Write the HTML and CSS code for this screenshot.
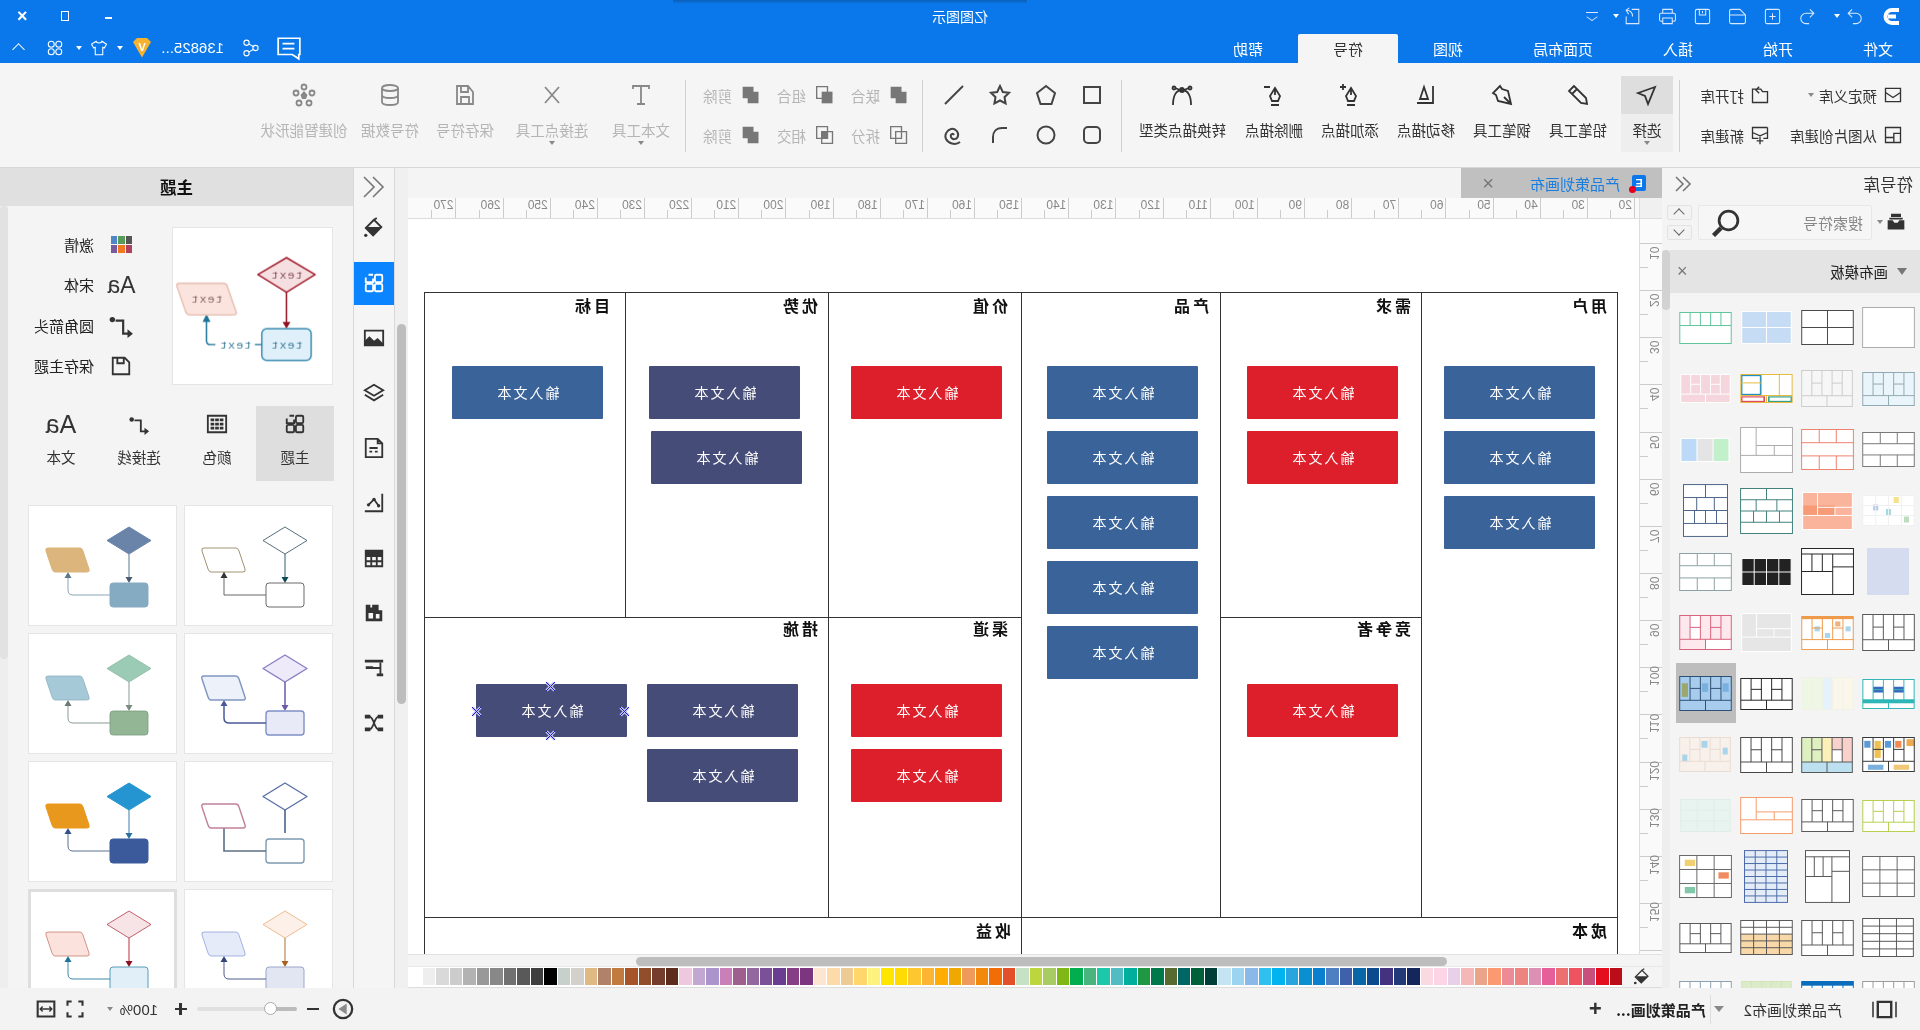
FILE: index.html
```html
<!DOCTYPE html>
<html lang="zh-CN">
<head>
    <meta charset="UTF-8">
    <title>亿图图示</title>
    <link rel="stylesheet" href="styles.css">
</head>
<body>
<!-- icon sprite -->
<svg class="sprite" xmlns="http://www.w3.org/2000/svg">
    <symbol id="i-undo" viewBox="0 0 24 24"><path d="M9 3L4 8l5 5M4 8h10a6.500 6.500 0 0 1 0 13h-4"/></symbol>
    <symbol id="i-redo" viewBox="0 0 24 24"><path d="M15 3l5 5-5 5M20 8H10a6.500 6.500 0 0 0 0 13h4"/></symbol>
    <symbol id="i-new" viewBox="0 0 24 24"><rect x="3" y="3" width="18" height="18" rx="2"/><path d="M12 8v8M8 12h8"/></symbol>
    <symbol id="i-open" viewBox="0 0 24 24"><path d="M2 10v9a2 2 0 0 0 2 2h16a2 2 0 0 0 2-2V5a2 2 0 0 0-2-2H9zM2 10h20"/></symbol>
    <symbol id="i-save" viewBox="0 0 24 24"><rect x="3" y="3" width="18" height="18" rx="2"/><path d="M8 3v7h8V3M12 5v3"/></symbol>
    <symbol id="i-print" viewBox="0 0 24 24"><path d="M6 8V3h12v5M6 18H4a2 2 0 0 1-2-2V10a2 2 0 0 1 2-2h16a2 2 0 0 1 2 2v6a2 2 0 0 1-2 2h-2M6 14h12v7H6z"/></symbol>
    <symbol id="i-export" viewBox="0 0 24 24"><path d="M13 3H4v18h16v-9M12 12c0-5 3-8 8-8M16 1l4 3-3 5"/></symbol>
    <symbol id="i-chat" viewBox="0 0 24 24"><path d="M2 3h20v15H9l-6 4v-4H2zM7 8h11M7 12.500h11"/></symbol>
    <symbol id="i-share" viewBox="0 0 24 24"><circle cx="6" cy="12" r="3.500"/><circle cx="18" cy="5" r="3.500"/><circle cx="18" cy="19" r="3.500"/><path d="M9 10l6-3.500M9 14l6 3.500"/></symbol>
    <symbol id="i-shirt" viewBox="0 0 24 24"><path d="M8 3L2 7l3 5 2-1v10h10V11l2 1 3-5-6-4c-1 3-7 3-8 0z"/></symbol>
    <symbol id="i-apps" viewBox="0 0 24 24"><circle cx="7" cy="7" r="4"/><circle cx="17" cy="7" r="4"/><circle cx="7" cy="17" r="4"/><circle cx="17" cy="17" r="4"/></symbol>

    <symbol id="i-lib" viewBox="0 0 24 24"><path d="M3 4h18v16H3zM3 9l9 6 9-6"/></symbol>
    <symbol id="i-libopen" viewBox="0 0 24 24"><path d="M3 8h6l2-3h10v16H3zM13 2l4 4-4 4"/></symbol>
    <symbol id="i-libimg" viewBox="0 0 24 24"><path d="M3 3h18v18H3zM3 10h8v11M11 15h10"/></symbol>
    <symbol id="i-libnew" viewBox="0 0 24 24"><path d="M3 3h18v13H14M3 3v13h5M3 9l9 4 9-4M12 14v9M8 19h8"/></symbol>
    <symbol id="i-cursor" viewBox="0 0 24 24"><path d="M4 4l17 6-7 3-3 8z"/></symbol>
    <symbol id="i-pencil" viewBox="0 0 24 24"><path d="M16 3l5 5L9 20l-6 1 1-6zM13 6l5 5"/></symbol>
    <symbol id="i-pen" viewBox="0 0 24 24"><path d="M14 3l7 7-3 2-2 6-13 3 3-13 6-2zM4 20l6-6"/></symbol>
    <symbol id="i-move" viewBox="0 0 24 24"><path d="M5 3v17h16"/><path d="M10 16l4-12 4 12z"/></symbol>
    <symbol id="i-add" viewBox="0 0 24 24"><path d="M11 5l5 8-2 5H8l-2-5zM11 5v7M7 22h8M19 1v6M16 4h6"/></symbol>
    <symbol id="i-del" viewBox="0 0 24 24"><path d="M11 5l5 8-2 5H8l-2-5zM11 5v7M7 22h8M16 4h6"/></symbol>
    <symbol id="i-convert" viewBox="0 0 24 24"><path d="M3 22c0-9 3-15 9-15s9 6 9 15M5 5l5 2M19 5l-5 2"/><circle cx="12" cy="7" r="2"/><circle cx="4" cy="5" r="1.500"/><circle cx="20" cy="5" r="1.500"/></symbol>

    <symbol id="i-rect" viewBox="0 0 24 24"><path d="M4 4h16v16H4z"/></symbol>
    <symbol id="i-penta" viewBox="0 0 24 24"><path d="M12 3l9 7-3.500 11h-11L3 10z"/></symbol>
    <symbol id="i-star" viewBox="0 0 24 24"><path d="M12 3l2.800 6 6.200.8-4.500 4.400 1.100 6.300L12 17.500 6.400 20.500l1.100-6.300L3 9.800 9.200 9z"/></symbol>
    <symbol id="i-line" viewBox="0 0 24 24"><path d="M3 3l18 18"/></symbol>
    <symbol id="i-rrect" viewBox="0 0 24 24"><rect x="4" y="4" width="16" height="16" rx="4"/></symbol>
    <symbol id="i-circle" viewBox="0 0 24 24"><circle cx="12" cy="12" r="8.500"/></symbol>
    <symbol id="i-arc" viewBox="0 0 24 24"><path d="M5 5h5c6 0 9 4 9 9v6"/></symbol>
    <symbol id="i-spiral" viewBox="0 0 24 24"><path d="M12 12c1-2 4-1 3 2s-6 3-7-1 3-8 7-7 7 6 5 10-9 7-14 3"/></symbol>

    <symbol id="i-union" viewBox="0 0 24 24"><path class="solid" d="M9 2h13v14h-6v6H3V8h6z"/></symbol>
    <symbol id="i-group" viewBox="0 0 24 24"><path class="solid" d="M3 8h13v14H3z"/><path d="M9 2h13v14H9z"/></symbol>
    <symbol id="i-subtract" viewBox="0 0 24 24"><path class="solid" d="M3 8h13v14H3zM9 2h13v14h-6V8H9z"/></symbol>
    <symbol id="i-split" viewBox="0 0 24 24"><path d="M9 2h13v14H9zM3 8h13v14H3z"/></symbol>
    <symbol id="i-intersect" viewBox="0 0 24 24"><path d="M9 2h13v14H9zM3 8h13v14H3z"/><path class="solid" d="M9 8h7v8H9z"/></symbol>

    <symbol id="i-text" viewBox="0 0 24 24"><path d="M4 6V3h16v3M12 3v18M8 21h8"/></symbol>
    <symbol id="i-connect" viewBox="0 0 24 24"><path d="M5 4l14 16M19 4L5 20"/></symbol>
    <symbol id="i-floppy" viewBox="0 0 24 24"><path d="M4 9l5-6h11v18H4zM9 3v6h7V3M8 21v-7h8v7"/></symbol>
    <symbol id="i-db" viewBox="0 0 24 24"><ellipse cx="12" cy="5" rx="8" ry="3"/><path d="M4 5v14c0 4 16 4 16 0V5M4 12c0 4 16 4 16 0"/></symbol>
    <symbol id="i-smart" viewBox="0 0 24 24"><circle cx="12" cy="4" r="2.500"/><circle cx="4" cy="10" r="2.500"/><circle cx="20" cy="10" r="2.500"/><circle cx="7" cy="20" r="2.500"/><circle cx="17" cy="20" r="2.500"/><path class="solid" d="M12 8l3.500 4-1.500 4h-4l-1.500-4z"/></symbol>

    <symbol id="i-bucket" viewBox="0 0 24 24"><path d="M12 3l9 9-8 8-9-9zM9 1l3 2"/><path class="solid" d="M4 11h17l-8 9z"/><circle class="solid" cx="21" cy="20" r="1.800"/></symbol>
    <symbol id="i-grid" viewBox="0 0 24 24"><rect x="3" y="3" width="8" height="8" rx="1.500"/><path d="M13 3h5M21 6v5h-8V7"/><rect x="3" y="13" width="8" height="8" rx="1.500"/><rect x="13" y="13" width="8" height="8" rx="1.500"/></symbol>
    <symbol id="i-image" viewBox="0 0 24 24"><path d="M2 4h20v16H2z"/><path class="solid" d="M2 18l6-6 4 3 5-5 5 5v5H2z"/></symbol>
    <symbol id="i-layers" viewBox="0 0 24 24"><path d="M12 3l10 6-10 6L2 9zM2 14l10 6 10-6"/></symbol>
    <symbol id="i-doc" viewBox="0 0 24 24"><path d="M8 2h13v20H3V7zM8 2v5H3M8 12h9M14 16h3M8 16h3"/></symbol>
    <symbol id="i-chart" viewBox="0 0 24 24"><path d="M3 2v19h19M7 15l5-7 6 6"/><circle class="solid" cx="7" cy="15" r="1.800"/><circle class="solid" cx="12" cy="8" r="1.800"/><circle class="solid" cx="18" cy="14" r="1.800"/></symbol>
    <symbol id="i-table" viewBox="0 0 24 24"><path d="M3 4h18v17H3zM3 10h18M3 15.500h18M9 10v11M15 10v11"/><path class="solid" d="M3 4h18v6H3z"/></symbol>
    <symbol id="i-puzzle" viewBox="0 0 24 24"><path class="solid" d="M3 9h4V3h7v3h2V3h5v18H3zM6 13v5h4v-5zM13 12v6h5v-6z"/></symbol>
    <symbol id="i-tree" viewBox="0 0 24 24"><path d="M5 6v13M5 12h9"/><path class="solid" d="M2 3h20v3H2zM2 18h7v3H2zM13 10h8v3h-8z"/></symbol>
    <symbol id="i-mind" viewBox="0 0 24 24"><path d="M7 5c5 0 5 14 10 14M17 5c-5 0-5 14-10 14"/><path class="solid" d="M2 3h6v4H2zM16 3h6v4h-6zM2 17h6v4H2zM16 17h6v4h-6z"/></symbol>
    <symbol id="i-savebox" viewBox="0 0 24 24"><path d="M3 8l5-5h13v18H3zM9 3v6h7V3"/></symbol>
    <symbol id="i-bend" viewBox="0 0 24 24"><path d="M3 20h7V8h7"/><circle class="solid" cx="20" cy="7" r="2.500"/><path class="solid" d="M6 16v8l-5-4z"/></symbol>
    <symbol id="i-colors" viewBox="0 0 24 24"><path d="M2 3h20v18H2z"/><path class="solid" d="M5 6h4v3H5zM10 6h4v3h-4zM15 6h4v3h-4zM5 10.500h4v3H5zM10 10.500h4v3h-4zM15 10.500h4v3h-4zM5 15h4v3H5zM10 15h4v3h-4zM15 15h4v3h-4z"/></symbol>
    <symbol id="i-search" viewBox="0 0 24 24"><circle cx="10" cy="10" r="7.500"/><path d="M16 16l6 6" stroke-width="3.500"/></symbol>
    <symbol id="i-box" viewBox="0 0 24 24"><path class="solid" d="M6 2h12v4H6zM4 7h16v2H4zM2 10h6l2 3h4l2-3h6v11H2z"/></symbol>
    <symbol id="i-pages" viewBox="0 0 28 24"><path d="M7 4h14v16H7z" stroke-width="2.500"/><path d="M2 4v16M26 4v16"/></symbol>
    <symbol id="i-fit" viewBox="0 0 24 24"><path d="M2 3h20v18H2z" stroke-width="2.500"/><path d="M6 12h12M8 9l-3 3 3 3M16 9l3 3-3 3"/></symbol>
    <symbol id="i-full" viewBox="0 0 24 24"><path d="M3 8V3h5M16 3h5v5M21 16v5h-5M8 21H3v-5" stroke-width="2.500"/></symbol>
    <symbol id="i-nav" viewBox="0 0 24 24"><circle cx="12" cy="12" r="10" stroke-width="2.500"/><path class="solid tint" d="M8 6v12l9-6z"/></symbol>
    <symbol id="i-hd" viewBox="0 0 11 11"><path d="M1.500 1.500l8 8M9.500 1.500l-8 8" stroke="#c6c6f5" stroke-width="3"/><path d="M1 1l9 9M10 1l-9 9" stroke="#1c1cc8" stroke-width="1"/></symbol>
</svg>

<div class="app">
    <!-- title bar -->
    <header class="titlebar">
        <div class="qa">
            <svg class="logo" viewBox="0 0 21 19"><path d="M4 3h7a6.500 6.500 0 0 1 0 13H4M7 9.500h8"/></svg>
            <svg class="qa-ic redo"><use href="#i-redo"/></svg>
            <i class="tri tri-white qa-drop"></i>
            <svg class="qa-ic undo"><use href="#i-undo"/></svg>
            <svg class="qa-ic"><use href="#i-new"/></svg>
            <svg class="qa-ic"><use href="#i-open"/></svg>
            <svg class="qa-ic"><use href="#i-save"/></svg>
            <svg class="qa-ic"><use href="#i-print"/></svg>
            <svg class="qa-ic"><use href="#i-export"/></svg>
            <i class="tri tri-white qa-drop2"></i>
            <span class="qa-more"></span>
        </div>
        <div class="app-title">亿图图示</div>
        <div class="win">
            <span class="win-min"></span>
            <span class="win-max"></span>
            <span class="win-close">×</span>
        </div>
    </header>

    <!-- menu tabs -->
    <nav class="menubar">
        <span class="menu-tab">文件</span>
        <span class="menu-tab">开始</span>
        <span class="menu-tab">插入</span>
        <span class="menu-tab">页面布局</span>
        <span class="menu-tab">视图</span>
        <span class="menu-tab active">符号</span>
        <span class="menu-tab">帮助</span>
        <div class="account">
            <svg class="acc-chat"><use href="#i-chat"/></svg>
            <svg class="acc-ic acc-share"><use href="#i-share"/></svg>
            <span class="user">136825...</span>
            <span class="vip">V</span>
            <i class="tri tri-white acc-d1"></i>
            <svg class="acc-ic acc-shirt"><use href="#i-shirt"/></svg>
            <i class="tri tri-white acc-d2"></i>
            <svg class="acc-ic acc-apps"><use href="#i-apps"/></svg>
            <span class="acc-up"></span>
        </div>
    </nav>

    <!-- ribbon -->
    <section class="ribbon">
        <div class="rb-lib">
            <div class="rb-row"><svg class="ic20"><use href="#i-lib"/></svg>预定义库<i class="tri lib-drop"></i></div>
            <div class="rb-row"><svg class="ic20"><use href="#i-libopen"/></svg>打开库</div>
            <div class="rb-row"><svg class="ic20"><use href="#i-libimg"/></svg>从图片创建库</div>
            <div class="rb-row"><svg class="ic20"><use href="#i-libnew"/></svg>新建库</div>
        </div>
        <div class="rb-sep"></div>
        <div class="rb-tools">
            <div class="tool sel"><span class="tool-ic"><svg class="ic24"><use href="#i-cursor"/></svg></span><span class="tool-label">选择</span><i class="tri"></i></div>
            <div class="tool"><span class="tool-ic"><svg class="ic24"><use href="#i-pencil"/></svg></span><span class="tool-label">铅笔工具</span></div>
            <div class="tool"><span class="tool-ic"><svg class="ic24"><use href="#i-pen"/></svg></span><span class="tool-label">钢笔工具</span></div>
            <div class="tool"><span class="tool-ic"><svg class="ic24"><use href="#i-move"/></svg></span><span class="tool-label">移动描点</span></div>
            <div class="tool"><span class="tool-ic"><svg class="ic24"><use href="#i-add"/></svg></span><span class="tool-label">添加描点</span></div>
            <div class="tool"><span class="tool-ic"><svg class="ic24"><use href="#i-del"/></svg></span><span class="tool-label">删除描点</span></div>
            <div class="tool wide"><span class="tool-ic"><svg class="ic24"><use href="#i-convert"/></svg></span><span class="tool-label">转换描点类型</span></div>
        </div>
        <div class="rb-sep sep-shapes"></div>
        <div class="rb-shapes">
            <svg class="ic24"><use href="#i-rect"/></svg>
            <svg class="ic24"><use href="#i-penta"/></svg>
            <svg class="ic24"><use href="#i-star"/></svg>
            <svg class="ic24"><use href="#i-line"/></svg>
            <svg class="ic24"><use href="#i-rrect"/></svg>
            <svg class="ic24"><use href="#i-circle"/></svg>
            <svg class="ic24"><use href="#i-arc"/></svg>
            <svg class="ic24"><use href="#i-spiral"/></svg>
        </div>
        <div class="rb-sep"></div>
        <div class="rb-bool">
            <div class="bool"><svg class="ic20"><use href="#i-union"/></svg>联合</div>
            <div class="bool"><svg class="ic20"><use href="#i-group"/></svg>组合</div>
            <div class="bool"><svg class="ic20"><use href="#i-subtract"/></svg>剪除</div>
            <div class="bool"><svg class="ic20"><use href="#i-split"/></svg>拆分</div>
            <div class="bool"><svg class="ic20"><use href="#i-intersect"/></svg>相交</div>
            <div class="bool"><svg class="ic20"><use href="#i-subtract"/></svg>剪除</div>
        </div>
        <div class="rb-sep"></div>
        <div class="rb-off">
            <div class="tool off w88"><span class="tool-ic"><svg class="ic24"><use href="#i-text"/></svg></span><span class="tool-label">文本工具</span><i class="tri"></i></div>
            <div class="tool off w90"><span class="tool-ic"><svg class="ic24"><use href="#i-connect"/></svg></span><span class="tool-label">连接点工具</span><i class="tri"></i></div>
            <div class="tool off w84"><span class="tool-ic"><svg class="ic24"><use href="#i-floppy"/></svg></span><span class="tool-label">保存符号</span></div>
            <div class="tool off w66"><span class="tool-ic"><svg class="ic24"><use href="#i-db"/></svg></span><span class="tool-label">符号数据</span></div>
            <div class="tool off w106"><span class="tool-ic"><svg class="ic24"><use href="#i-smart"/></svg></span><span class="tool-label">创建智能形状</span></div>
        </div>
    </section>

    <main class="main">
        <!-- symbol library -->
        <aside class="lib">
            <div class="lib-head">
                <span class="lib-title">符号库</span>
                <svg class="chev"><path d="M9 2L2 9l7 7M16 2L9 9l7 7"/></svg>
            </div>
            <div class="lib-search">
                <svg class="ic20 box-ic"><use href="#i-box"/></svg>
                <i class="tri lib-search-d"></i>
                <div class="search-box">
                    <span>搜索符号</span>
                    <svg class="search-ic"><use href="#i-search"/></svg>
                </div>
                <div class="updown">
                    <span class="ud ud-up"></span>
                    <span class="ud ud-down"></span>
                </div>
            </div>
            <div class="lib-wrap">
                <div class="lib-body">
                    <div class="cat">
                        <i class="tri cat-tri"></i>
                        <span>画布模板</span>
                        <span class="cat-x">×</span>
                    </div>
                    <div class="tpl-grid" id="tplGrid"></div>
                </div>
                <div class="lib-scroll"><div class="lib-thumb"></div></div>
            </div>
        </aside>

        <!-- canvas area -->
        <section class="center">
            <div class="docbar">
                <div class="doc-tab">
                    <span class="doc-ic">E<i></i></span>
                    <span class="doc-name">产品策划画布</span>
                    <span class="doc-x">×</span>
                </div>
            </div>
            <div class="hruler">
                <div class="corner"></div>
                <div class="hticks" id="hticks"></div>
            </div>
            <div class="canvas-row">
                <div class="vruler" id="vticks"></div>
                <div class="canvas">
                    <div class="bmc">
                        <div class="cell c-user"><div class="cell-title">用户</div><div class="nodes"><div class="node blue">输入文本</div><div class="node blue">输入文本</div><div class="node blue">输入文本</div></div></div>
                        <div class="cell c-need"><div class="cell-title">需求</div><div class="nodes"><div class="node red">输入文本</div><div class="node red">输入文本</div></div></div>
                        <div class="cell c-prod"><div class="cell-title">产品</div><div class="nodes"><div class="node blue">输入文本</div><div class="node blue">输入文本</div><div class="node blue">输入文本</div><div class="node blue">输入文本</div><div class="node blue">输入文本</div></div></div>
                        <div class="cell c-value"><div class="cell-title">价值</div><div class="nodes"><div class="node red">输入文本</div></div></div>
                        <div class="cell c-adv"><div class="cell-title">优势</div><div class="nodes"><div class="node navy">输入文本</div><div class="node navy nudge">输入文本</div></div></div>
                        <div class="cell c-goal"><div class="cell-title">目标</div><div class="nodes"><div class="node blue">输入文本</div></div></div>
                        <div class="cell low c-rival"><div class="cell-title">竞争者</div><div class="nodes"><div class="node red">输入文本</div></div></div>
                        <div class="cell low c-chan"><div class="cell-title">渠道</div><div class="nodes"><div class="node red">输入文本</div><div class="node red">输入文本</div></div></div>
                        <div class="cell low c-act">
                            <div class="cell-title">措施</div>
                            <div class="act-row">
                                <div class="nodes"><div class="node navy">输入文本</div><div class="node navy">输入文本</div></div>
                                <div class="node navy picked">输入文本
                                    <svg class="hd hd-t"><use href="#i-hd"/></svg>
                                    <svg class="hd hd-b"><use href="#i-hd"/></svg>
                                    <svg class="hd hd-l"><use href="#i-hd"/></svg>
                                    <svg class="hd hd-r"><use href="#i-hd"/></svg>
                                </div>
                            </div>
                        </div>
                        <div class="cell c-cost"><div class="cell-title">成本</div></div>
                        <div class="cell c-rev"><div class="cell-title">收益</div></div>
                    </div>
                </div>
            </div>
            <div class="hscroll"><div class="hthumb"></div></div>
            <div class="colors">
                <div class="bucket"><svg class="ic18"><use href="#i-bucket"/></svg></div>
                <div class="swatches" id="swatches"></div>
            </div>
        </section>

        <div class="vscroll"><div class="vthumb"></div></div>

        <!-- icon strip -->
        <div class="strip">
            <div class="strip-top"><svg class="chev-big"><path d="M12 2L2 12l10 10M21 2L11 12l10 10"/></svg></div>
            <div class="strip-btn"><svg class="ic22"><use href="#i-bucket"/></svg></div>
            <div class="strip-btn active"><svg class="ic22"><use href="#i-grid"/></svg></div>
            <div class="strip-btn"><svg class="ic22"><use href="#i-image"/></svg></div>
            <div class="strip-btn"><svg class="ic22"><use href="#i-layers"/></svg></div>
            <div class="strip-btn"><svg class="ic22"><use href="#i-doc"/></svg></div>
            <div class="strip-btn"><svg class="ic22"><use href="#i-chart"/></svg></div>
            <div class="strip-btn"><svg class="ic22"><use href="#i-table"/></svg></div>
            <div class="strip-btn"><svg class="ic22"><use href="#i-puzzle"/></svg></div>
            <div class="strip-btn"><svg class="ic22"><use href="#i-tree"/></svg></div>
            <div class="strip-btn"><svg class="ic22"><use href="#i-mind"/></svg></div>
        </div>

        <!-- theme panel -->
        <aside class="themes">
            <div class="themes-head">主题</div>
            <div class="themes-wrap">
                <div class="themes-body">
                    <div class="theme-top">
                        <svg class="preview" viewBox="0 0 161 158">
                            <path d="M46 30l29 17-29 18-29-18z" fill="#f5dfe1" stroke="#a3202f" stroke-width="1.500" stroke-linejoin="round"/>
                            <text x="46" y="51" class="pv-t" fill="#8a5560">text</text>
                            <path d="M46 65v32" stroke="#8e1020" stroke-width="1.500"/>
                            <path d="M42 95h8l-4 7z" fill="#8e1020"/>
                            <rect x="21" y="102" width="50" height="32" rx="5" fill="#dff0fa" stroke="#3a8cb0" stroke-width="1.500"/>
                            <text x="46" y="122" class="pv-t" fill="#3f7f9c">text</text>
                            <path d="M71 118h52q4 0 4-4V94" fill="none" stroke="#1f7396" stroke-width="1.500"/>
                            <path d="M123 95h8l-4-8z" fill="#1f7396"/>
                            <rect x="78" y="110" width="40" height="16" fill="#fff"/>
                            <text x="98" y="122" class="pv-t" fill="#3f7f9c">text</text>
                            <path d="M113 56h41q4 0 3 3l-9 26q-1 3-4 3H100q-4 0-3-3l9-26q1-3 4-3z" fill="#fbe4de" stroke="#e8c3b8"/>
                            <text x="127" y="76" class="pv-t" fill="#8a6a60">text</text>
                        </svg>
                        <div class="theme-opts">
                            <div class="opt"><span class="opt-ic"><span class="palette"><i></i><i></i><i></i><i></i><i></i><i></i></span></span>激情</div>
                            <div class="opt"><span class="opt-ic"><span class="aa">Aa</span></span>宋体</div>
                            <div class="opt"><span class="opt-ic"><svg class="ic26 black"><use href="#i-bend"/></svg></span>圆角箭头</div>
                            <div class="opt"><span class="opt-ic"><svg class="ic22 black"><use href="#i-savebox"/></svg></span>保存主题</div>
                        </div>
                    </div>
                    <div class="theme-tabs">
                        <div class="ttab active"><svg class="ic22"><use href="#i-grid"/></svg>主题</div>
                        <div class="ttab"><svg class="ic22"><use href="#i-colors"/></svg>颜色</div>
                        <div class="ttab"><svg class="ic22"><use href="#i-bend"/></svg>连接线</div>
                        <div class="ttab"><span class="aa big">Aa</span>文本</div>
                    </div>
                    <div class="theme-cards" id="themeCards"></div>
                </div>
                <div class="themes-scroll"><div class="themes-thumb"></div></div>
            </div>
        </aside>
    </main>

    <!-- status bar -->
    <footer class="status">
        <svg class="st-pages"><use href="#i-pages"/></svg>
        <span class="st-page">产品策划画布2</span>
        <i class="tri st-tri"></i>
        <span class="st-sep"></span>
        <span class="st-cur">产品策划画...</span>
        <span class="st-plus">+</span>
        <div class="zoom">
            <svg class="ic22"><use href="#i-nav"/></svg>
            <span class="z-btn z-minus"></span>
            <div class="slider"><span class="knob"></span></div>
            <span class="z-btn z-plus"></span>
            <span class="z-val">100%</span>
            <i class="tri z-tri"></i>
            <svg class="ic20 z-full"><use href="#i-full"/></svg>
            <svg class="ic20 z-fit"><use href="#i-fit"/></svg>
        </div>
    </footer>
</div>
<script src="script.js"></script>
</body>
</html>
```

FILE: styles.css
```css
* {
    box-sizing: border-box;
}

body {
    margin: 0;
    overflow: hidden;
    background: #f3f3f3;
    font-family: "Noto Sans CJK SC", "Liberation Sans", sans-serif;
    color: #333;
}

.sprite {
    display: none;
}

svg {
    fill: none;
    stroke: currentColor;
    stroke-width: 1.6;
    flex: none;
}

.solid {
    fill: currentColor;
    stroke: none;
}

.tint {
    fill: #8a8a8a;
}

/* the whole window is shown flipped, as in the screenshot */
.app {
    width: 1920px;
    height: 1030px;
    display: flex;
    flex-direction: column;
    transform: scaleX(-1);
}

.tri {
    display: block;
    width: 0;
    height: 0;
    border-left: 3px solid transparent;
    border-right: 3px solid transparent;
    border-top: 4px solid #888;
}

.tri-white {
    border-top-color: #fff;
}

.ic18 { width: 18px; height: 18px; }
.ic20 { width: 20px; height: 20px; }
.ic22 { width: 22px; height: 22px; }
.ic24 { width: 24px; height: 24px; }
.ic26 { width: 26px; height: 26px; }

/* title bar */
.titlebar {
    height: 32px;
    background: #0a78ea;
    color: #fff;
    display: flex;
    align-items: center;
    position: relative;
}

.titlebar::before {
    content: "";
    position: absolute;
    top: 0;
    left: 893px;
    width: 354px;
    height: 4px;
    background: linear-gradient(#0b5fb8, #0a78ea);
}

.qa {
    flex: 1 1 0;
    display: flex;
    align-items: center;
    padding-left: 17px;
    gap: 16px;
}

.logo {
    width: 21px;
    height: 19px;
    stroke-width: 4;
    color: #fff;
}

.qa-ic {
    width: 19px;
    height: 19px;
    stroke-width: 1.300;
    color: #dbe9ff;
}

.redo {
    margin-left: 1.500px;
}

.qa-drop {
    margin-left: -10.500px;
}

.undo {
    margin-left: .500px;
}

.qa-drop2 {
    margin-left: -11.500px;
}

.qa-more {
    width: 12px;
    height: 9px;
    margin-left: -1px;
    border-top: 1px solid #dbe9ff;
    position: relative;
}

.qa-more::after {
    content: "";
    position: absolute;
    left: 2px;
    top: 0;
    width: 7px;
    height: 7px;
    border-right: 1px solid #dbe9ff;
    border-bottom: 1px solid #dbe9ff;
    transform: scaleY(.7) rotate(45deg);
}

.app-title {
    font-size: 14px;
    line-height: 30px;
}

.win {
    flex: 1 1 0;
    display: flex;
    align-items: center;
    justify-content: flex-end;
    padding-right: 17px;
}

.win-min {
    width: 7px;
    height: 2px;
    background: #fff;
    margin-right: 36px;
    margin-top: 3px;
}

.win-max {
    width: 8px;
    height: 10px;
    border: 1.500px solid #fff;
    margin-right: 33px;
}

.win-close {
    font: bold 18px/18px "Liberation Sans", sans-serif;
}

/* menu tabs */
.menubar {
    height: 31px;
    background: #0a78ea;
    color: #fff;
    display: flex;
    align-items: flex-end;
    font-size: 15px;
}

.menu-tab {
    height: 29px;
    line-height: 29px;
    padding: 0 35px;
}

.menu-tab:first-child {
    padding-left: 27px;
}

.menu-tab.active {
    background: #f5f5f5;
    color: #333;
    border-radius: 2px 2px 0 0;
}

.account {
    margin-left: auto;
    align-self: center;
    display: flex;
    align-items: center;
    padding-right: 12px;
}

.acc-chat {
    width: 26px;
    height: 26px;
}

.acc-ic {
    width: 18px;
    height: 18px;
    stroke-width: 1.400;
}

.acc-share { margin-left: 16px; }
.acc-shirt { margin-left: 9px; }
.acc-apps { margin-left: 12px; }
.acc-d1 { margin-left: 10px; }
.acc-d2 { margin-left: 8px; }

.user {
    width: 64px;
    margin-left: 18px;
    font: 15px "Liberation Sans", sans-serif;
}

.vip {
    width: 18px;
    height: 20px;
    margin-left: 9px;
    background: #f5b22e;
    clip-path: polygon(0 22%, 25% 0, 75% 0, 100% 22%, 50% 100%);
    color: #fff;
    font: bold 11px/18px "Liberation Sans", sans-serif;
    text-align: center;
}

.acc-up {
    width: 9px;
    height: 9px;
    margin: 4px 2px 0 23px;
    border-left: 1px solid #fff;
    border-top: 1px solid #fff;
    transform: rotate(45deg);
}

/* ribbon */
.ribbon {
    height: 105px;
    background: #f5f5f5;
    border-bottom: 1px solid #d8d8d8;
    display: flex;
    align-items: flex-start;
    padding-top: 13px;
    font-size: 14.500px;
    color: #333;
}

.rb-sep {
    width: 1px;
    height: 72px;
    margin-top: 4px;
    background: #d0d0d0;
}

.sep-shapes {
    margin-left: 7px;
}

.rb-lib {
    width: 240px;
    padding-left: 17px;
    display: grid;
    grid-template-columns: 133px auto;
    grid-auto-rows: 40px;
    margin-top: -1px;
}

.rb-row {
    display: flex;
    align-items: center;
    gap: 6px;
}

.lib-drop {
    margin-left: -1px;
}

.rb-tools {
    display: flex;
    margin-left: 6px;
}

.tool {
    width: 76px;
    display: flex;
    flex-direction: column;
    align-items: center;
}

.tool svg {
    stroke-width: 1.800;
}

.tool-ic {
    width: 100%;
    height: 38px;
    display: flex;
    align-items: center;
    justify-content: center;
}

.tool-label {
    line-height: 20px;
    margin-top: 6px;
    white-space: nowrap;
}

.tool .tri {
    margin-top: 1px;
}

.tool.wide {
    width: 107px;
}

.tool.sel {
    width: 52px;
    height: 76px;
    margin-right: 5px;
    background: #eee;
}

.tool.sel .tool-ic {
    background: #dedede;
}

.rb-shapes {
    display: grid;
    grid-template-columns: repeat(4, 46px);
    grid-auto-rows: 40px;
    place-items: center;
    margin: -1px 8px 0 6px;
    color: #444;
}

.rb-shapes svg {
    stroke-width: 2;
}

.rb-bool {
    display: grid;
    grid-template-columns: repeat(3, 74px);
    grid-auto-rows: 40px;
    margin: -1px 1px 0 13px;
    color: #b5b5b5;
}

.bool {
    display: flex;
    align-items: center;
    gap: 9px;
}

.bool svg {
    color: #777;
}

.rb-off {
    display: flex;
}

.tool.off {
    color: #b5b5b5;
}

.tool.off svg {
    color: #888;
}

.w88 { width: 88px; }
.w90 { width: 90px; }
.w84 { width: 84px; }
.w66 { width: 66px; }
.w106 { width: 106px; }

/* main row */
.main {
    height: 820px;
    display: flex;
}

/* symbol library */
.lib {
    width: 258px;
    display: flex;
    flex-direction: column;
    background: #f4f4f4;
}

.lib-head {
    height: 37px;
    display: flex;
    align-items: center;
    justify-content: space-between;
    padding: 0 12px 6px 7px;
}

.lib-title {
    font-size: 16.500px;
}

.chev {
    width: 18px;
    height: 18px;
    color: #777;
}

.chev-big {
    width: 23px;
    height: 24px;
    color: #777;
}

.lib-search {
    height: 45px;
    display: flex;
    align-items: flex-start;
}

.box-ic {
    margin-left: 14px;
    margin-top: 7px;
}

.lib-search-d {
    margin: 15px 5px 0 3px;
}

.search-box {
    width: 174px;
    height: 35px;
    background: #f6f6f6;
    border: 1px solid #e8e8e8;
    border-radius: 2px;
    display: flex;
    align-items: center;
    justify-content: space-between;
    padding: 0 12px 0 8px;
    font-size: 15px;
    color: #888;
}

.search-ic {
    width: 30px;
    height: 30px;
    color: #333;
    stroke-width: 2.200;
}

.updown {
    margin-left: 6px;
    display: flex;
    flex-direction: column;
    gap: 5px;
}

.ud {
    width: 25px;
    height: 15px;
    background: #f3f3f3;
    border: 1px solid #e2e2e2;
    border-radius: 2px;
    position: relative;
}

.ud::after {
    content: "";
    position: absolute;
    left: 8px;
    width: 7px;
    height: 7px;
    border-left: 1.500px solid #666;
    border-top: 1.500px solid #666;
}

.ud-up::after {
    top: 4px;
    transform: rotate(45deg);
}

.ud-down::after {
    top: 0;
    transform: rotate(225deg);
}

.lib-wrap {
    flex: 1;
    min-height: 0;
    display: flex;
}

.lib-body {
    width: 250px;
    overflow: hidden;
}

.cat {
    height: 43px;
    background: #e4e4e4;
    display: flex;
    align-items: center;
    padding-left: 13px;
    font-size: 14.500px;
    color: #222;
}

.cat-tri {
    border-left-width: 5px;
    border-right-width: 5px;
    border-top: 7px solid #777;
    margin-right: 9px;
}

.cat-x {
    margin-left: auto;
    margin-right: 7px;
    font: 18px "Liberation Sans", sans-serif;
    color: #777;
}

.tpl-grid {
    display: grid;
    grid-template-columns: repeat(4, 61px);
    grid-auto-rows: 61px;
    margin: 4px 0 0 1px;
}

.tpl {
    display: flex;
    align-items: center;
    justify-content: center;
}

.tpl.on {
    background: #bdbdbd;
    margin: 0 1px 1px 0;
}

.lib-scroll {
    width: 8px;
    background: #eee;
}

.lib-thumb {
    height: 60px;
    border-radius: 4px;
    background: #d2d2d2;
}

/* center */
.center {
    width: 1254px;
    display: flex;
    flex-direction: column;
    background: #f4f4f4;
}

.docbar {
    height: 30px;
}

.doc-tab {
    width: 201px;
    height: 30px;
    background: #c0c0c0;
    display: flex;
    align-items: center;
    font-size: 15px;
    color: #1a7ee0;
}

.doc-ic {
    position: relative;
    width: 14px;
    height: 16px;
    margin-left: 16px;
    background: #0a78ea;
    border-radius: 2px;
    color: #fff;
    font: bold 11px/16px "Liberation Sans", sans-serif;
    text-align: center;
}

.doc-ic i {
    position: absolute;
    right: -3px;
    bottom: -2px;
    width: 7px;
    height: 7px;
    border-radius: 50%;
    background: #e8001c;
}

.doc-name {
    margin-left: 12px;
}

.doc-x {
    margin-left: 36px;
    font: 20px "Liberation Sans", sans-serif;
    color: #777;
}

.hruler {
    height: 21px;
    display: flex;
    border-bottom: 1px solid #ddd;
}

.corner {
    width: 23px;
    background: #f0f0f0;
    border-right: 1px solid #ddd;
}

.hticks {
    flex: 1;
    display: flex;
    padding-left: 4px;
    background: #fafafa;
    overflow: hidden;
}

.htick {
    flex: 0 0 47.150px;
    border-left: 1px solid #ccc;
    padding-left: 2px;
    font: 12px/14px "Liberation Sans", sans-serif;
    color: #888;
    position: relative;
}

.htick::after {
    content: "";
    position: absolute;
    left: 23px;
    bottom: 0;
    height: 8px;
    border-left: 1px solid #ccc;
}

.canvas-row {
    height: 735px;
    display: flex;
}

.vruler {
    width: 23px;
    padding-top: 24px;
    background: #fafafa;
    border-right: 1px solid #ddd;
    overflow: hidden;
}

.vtick {
    height: 47.150px;
    border-top: 1px solid #ccc;
    position: relative;
    font: 12px/22px "Liberation Sans", sans-serif;
    color: #888;
}

.vtick::after {
    content: "";
    position: absolute;
    left: 14px;
    right: 0;
    top: 23px;
    border-top: 1px solid #ccc;
}

.vtick span {
    display: block;
    width: 22px;
    height: 18px;
    writing-mode: vertical-rl;
    transform: rotate(180deg);
    text-align: center;
    white-space: nowrap;
    line-height: 16px;
}

.canvas {
    flex: 1;
    background: #fff;
    overflow: hidden;
}

/* canvas diagram */
.bmc {
    margin: 73px 0 0 21px;
    width: 1193px;
    display: grid;
    grid-template-columns: 196px 201px 199px 193px 203px 201px;
    grid-template-rows: 325px 300px 100px;
}

.cell {
    border: 1px solid #333;
    margin: 0 -1px -1px 0;
}

.cell-title {
    height: 24px;
    line-height: 24px;
    padding-left: 10px;
    font-size: 16px;
    font-weight: 700;
    letter-spacing: 3px;
    color: #111;
    margin-left: -22px;
}

.nodes {
    display: flex;
    flex-direction: column;
    align-items: flex-start;
    gap: 12px;
    margin-top: 49px;
}

.low .cell-title {
    margin-top: -2px;
}

.low .nodes {
    margin-top: 44px;
}

.node {
    width: 151px;
    height: 53px;
    line-height: 53px;
    text-align: center;
    font-size: 14px;
    letter-spacing: 2px;
    color: #fff;
    border-radius: 1px;
}

.blue { background: #3a6399; }
.navy { background: #464c78; }
.red { background: #dc1f2a; }

.nudge {
    margin-left: -2px;
}

.c-user { grid-area: 1 / 1 / 3 / 2; padding-left: 22px; }
.c-need { grid-area: 1 / 2 / 2 / 3; padding-left: 23px; }
.c-prod { grid-area: 1 / 3 / 3 / 4; padding-left: 22px; }
.c-value { grid-area: 1 / 4 / 2 / 5; padding-left: 19px; }
.c-adv { grid-area: 1 / 5 / 2 / 6; padding-left: 28px; }
.c-goal { grid-area: 1 / 6 / 2 / 7; padding-left: 22px; }
.c-rival { grid-area: 2 / 2 / 3 / 3; padding-left: 23px; }
.c-chan { grid-area: 2 / 4 / 3 / 5; padding-left: 19px; }
.c-act { grid-area: 2 / 5 / 3 / 7; padding-left: 30px; }
.c-cost { grid-area: 3 / 1 / 4 / 4; padding-left: 22px; }
.c-rev { grid-area: 3 / 4 / 4 / 7; padding-left: 22px; }

.c-act .cell-title { margin-left: -30px; }
.c-need .cell-title, .c-rival .cell-title { margin-left: -23px; }
.c-prod .cell-title { margin-left: -21px; }
.c-value .cell-title, .c-chan .cell-title { margin-left: -16px; }
.c-adv .cell-title { margin-left: -28px; }
.c-goal .cell-title { margin-left: -17px; }

.act-row {
    display: flex;
    align-items: flex-start;
    gap: 20px;
    margin-top: 44px;
}

.act-row .nodes {
    margin-top: 0;
}

.picked {
    position: relative;
}

.hd {
    position: absolute;
    width: 11px;
    height: 11px;
}

.hd-t { left: 70.500px; top: -3.500px; }
.hd-b { left: 70.500px; top: 45.500px; }
.hd-l { left: -3.500px; top: 21.500px; }
.hd-r { left: 144.500px; top: 21.500px; }

.hscroll {
    height: 12px;
    padding: 2px 0 1px 215px;
    border-top: 1px solid #e2e2e2;
}

.hthumb {
    width: 811px;
    height: 9px;
    border-radius: 5px;
    background: #bdbdbd;
}

.colors {
    height: 22px;
    display: flex;
    background: #fff;
    border-top: 1px solid #e8e8e8;
    border-bottom: 1px solid #ddd;
}

.bucket {
    width: 40px;
    display: flex;
    align-items: center;
    justify-content: center;
    background: #f4f4f4;
    color: #333;
}

.swatches {
    flex: 1;
    display: flex;
    padding: 1px 0 2px;
}

.swatch {
    flex: 1;
    border-right: 1px solid #fff;
}

/* scrollbar between canvas and strip */
.vscroll {
    width: 14px;
    padding: 156px 2px 0;
    background: #f0f0f0;
    border-right: 1px solid #d8d8d8;
}

.vthumb {
    height: 380px;
    border-radius: 5px;
    background: #bdbdbd;
}

/* icon strip */
.strip {
    width: 41px;
    background: #f5f5f5;
    border-right: 1px solid #d8d8d8;
    color: #333;
}

.strip-top {
    height: 32.500px;
    display: flex;
    align-items: center;
    justify-content: center;
    padding-top: 6px;
}

.strip-btn {
    height: 55px;
    display: flex;
    align-items: center;
    justify-content: center;
}

.strip-btn svg {
    stroke-width: 2;
}

.strip-btn.active {
    color: #fff;
    background: linear-gradient(#0a84ff, #0a84ff) center / 100% 43px no-repeat;
}

/* theme panel */
.themes {
    width: 353px;
    display: flex;
    flex-direction: column;
    background: #f4f4f4;
}

.themes-head {
    height: 38px;
    line-height: 38px;
    background: #e0e0e0;
    text-align: center;
    font-size: 16.500px;
    font-weight: 700;
    color: #111;
}

.themes-wrap {
    flex: 1;
    min-height: 0;
    display: flex;
}

.themes-body {
    width: 345px;
    padding: 21px 0 0 20px;
    overflow: hidden;
}

.theme-top {
    height: 158px;
    display: flex;
}

.preview {
    width: 161px;
    height: 158px;
    background: #fff;
    border: 1px solid #e5e5e5;
    stroke: none;
}

.pv-t {
    font: 12px "Liberation Mono", monospace;
    text-anchor: middle;
    letter-spacing: 1px;
    stroke: none;
}

.theme-opts {
    margin: -3px 0 0 37px;
}

.opt {
    height: 40.500px;
    display: flex;
    align-items: center;
    gap: 14px;
    font-size: 15px;
    color: #222;
}

.opt-ic {
    width: 27px;
    display: flex;
    align-items: center;
    justify-content: center;
}

.palette {
    display: grid;
    grid-template-columns: repeat(3, 1fr);
    grid-auto-rows: 8px;
    gap: 1px;
    width: 21px;
}

.palette i:nth-child(1) { background: #555; }
.palette i:nth-child(2) { background: #5a9a5a; }
.palette i:nth-child(3) { background: #4f86c6; }
.palette i:nth-child(4) { background: #b04060; }
.palette i:nth-child(5) { background: #f07820; }
.palette i:nth-child(6) { background: #7a5a9a; }

.aa {
    font: 23px/22px "Liberation Sans", sans-serif;
    color: #333;
    white-space: nowrap;
}

.aa.big {
    font-size: 25px;
}

.black {
    color: #333;
    stroke-width: 2;
}

.theme-tabs {
    display: flex;
    margin: 21px 0 24px -1px;
}

.ttab {
    width: 78px;
    height: 75px;
    display: flex;
    flex-direction: column;
    align-items: center;
    gap: 12px;
    padding-top: 7px;
    font-size: 14.500px;
    line-height: 20px;
    color: #333;
}

.ttab svg {
    stroke-width: 2;
}

.ttab.active {
    background: #dedede;
}

.theme-cards {
    display: grid;
    grid-template-columns: 149px 149px;
    grid-auto-rows: 121px;
    gap: 7px;
}

.theme-card {
    background: #fff;
    border: 1px solid #e5e5e5;
}

.theme-card.on {
    border: 3px solid #dedede;
}

.theme-card svg {
    display: block;
    margin: -1px;
    stroke: none;
    overflow: visible;
}

.theme-card.on svg {
    margin: -3px;
}

.themes-scroll {
    width: 8px;
    background: #eee;
}

.themes-thumb {
    height: 453px;
    border-radius: 4px;
    background: #e2e2e2;
}

/* status bar */
.status {
    height: 42px;
    background: #f3f3f3;
    display: flex;
    align-items: center;
    font-size: 15px;
    color: #333;
}

.st-pages {
    width: 27px;
    height: 23px;
    margin-left: 22px;
}

.st-page {
    margin-left: 29px;
}

.st-tri {
    margin-left: 20px;
    border-left-width: 5px;
    border-right-width: 5px;
    border-top-width: 6px;
}

.st-sep {
    width: 1px;
    height: 29px;
    margin: 0 4px 0 3px;
    background: #ddd;
}

.st-cur {
    width: 90px;
    white-space: nowrap;
    font-weight: 700;
    color: #222;
}

.st-plus {
    margin-left: 14px;
    font: bold 22px "Liberation Sans", sans-serif;
}

.zoom {
    margin-left: auto;
    width: 354px;
    display: flex;
    align-items: center;
}

.z-btn {
    position: relative;
    width: 12px;
    height: 2.500px;
    background: #333;
}

.z-minus {
    margin-left: 13px;
}

.z-plus::after {
    content: "";
    position: absolute;
    left: 5px;
    top: -5px;
    width: 2.500px;
    height: 12px;
    background: #333;
}

.slider {
    position: relative;
    width: 100px;
    height: 4px;
    margin: 0 10px;
    border-radius: 2px;
    background: linear-gradient(90deg, #bbb 26%, #e0e0e0 26%);
}

.knob {
    position: absolute;
    left: 20px;
    top: -5px;
    width: 13px;
    height: 13px;
    border-radius: 50%;
    background: #fff;
    border: 1.500px solid #aaa;
}

.z-val {
    width: 48px;
    margin-left: 17px;
    font: 15px "Liberation Sans", sans-serif;
}

.z-tri {
    margin-left: -3px;
}

.z-full {
    margin-left: 22px;
}

.z-fit {
    margin-left: 9px;
}
```

FILE: script.js
```js
// colour strip, in screen order of the flipped window
const colours = ['#ffffff','#eeeeee','#d9d9d9','#cccccc','#b2b2b2','#999999','#888888','#707070','#595959','#3f3f3f','#000000',
    '#c8d0cb','#d3cfca','#e0b883','#b0826a','#c37a3e','#a85429','#914e2b','#753d2b','#5e2c1c',
    '#eec8df','#c2a8d0','#ab94cb','#c97fb8','#9e5f8e','#93679f','#7b5098','#693d90','#863f85','#7c3680',
    '#fde6d1','#fcdaa9','#edcb95','#fed66b','#fcf27d','#ffe600','#ffdb00','#fdc82f','#fbb532','#ffad00','#f0a800','#ef9a5a','#f1890d','#f36d06','#e2502a',
    '#c7e1c4','#bdd63e','#a8cb62','#7fb815','#00ad4f','#48b57e','#1bc8a9','#52bcc4','#00ae9e','#1f9843','#00794a','#586a30','#006666','#00603a','#003f38',
    '#c4e3f3','#9bd3f0','#8ab9e9','#30c0f0','#00b5ef','#28a5de','#0a8fd0','#0a7fd0','#4e7fc2','#3f60aa','#0967a8','#0b4a8f','#43327f','#233a78','#14275c',
    '#fbd9e2','#fcd4e5','#e8d1e8','#f5b7b7','#eba38a','#fb9a70','#ec8a96','#ee8480','#de90b4','#e55f9b','#ec6f71','#ef5261','#c84e7b','#e30e1e','#ba0d18'];

const swatches = document.getElementById('swatches');
colours.slice().reverse().forEach(c => {
    const s = document.createElement('span');
    s.className = 'swatch';
    s.style.background = c;
    swatches.appendChild(s);
});

// rulers
const hticks = document.getElementById('hticks');
for (let n = 20; n <= 270; n += 10) {
    hticks.insertAdjacentHTML('beforeend', `<span class="htick">${n}</span>`);
}
const vticks = document.getElementById('vticks');
for (let n = 10; n <= 160; n += 10) {
    // the last tick has no room for a label
    vticks.insertAdjacentHTML('beforeend', `<div class="vtick">${n < 160 ? `<span>${n}</span>` : ''}</div>`);
}

// canvas template thumbnails: line sets in 0..1 coordinates
const bmc = [[.2,0,.2,.7],[.4,0,.4,.7],[.6,0,.6,.7],[.8,0,.8,.7],[.2,.35,.4,.35],[.6,.35,.8,.35],[0,.7,1,.7],[.5,.7,.5,1]];
const quad = [[.5,0,.5,1],[0,.5,1,.5]];
const top5 = [[.2,0,.2,.42],[.4,0,.4,.42],[.6,0,.6,.42],[.8,0,.8,.42],[0,.42,1,.42]];
const brick = [[0,.33,1,.33],[0,.66,1,.66],[.33,0,.33,.33],[.66,0,.66,.33],[.33,.66,.33,1],[.66,.66,.66,1]];
const brick2 = [[0,.25,1,.25],[0,.5,1,.5],[0,.75,1,.75],[.5,0,.5,.25],[.3,.25,.3,.5],[.7,.25,.7,.5],[.25,.5,.25,.75],[.5,.5,.5,.75],[.75,.5,.75,.75]];
const big = [[.7,0,.7,.62],[0,.62,1,.62],[0,.4,.7,.4],[.35,.4,.35,.62]];
const side = [[0,.12,1,.12],[.4,.12,.4,1],[0,.4,.4,.4],[.4,.5,1,.5],[.6,.12,.6,.5],[.8,.12,.8,.5]];
const grid = (r, c) => {
    const out = [];
    for (let i = 1; i < r; i++) out.push([0, i / r, 1, i / r]);
    for (let i = 1; i < c; i++) out.push([i / c, 0, i / c, 1]);
    return out;
};

// [w, h, stroke, fill, lines, tints]; tints are [x, y, w, h, colour] in 0..1
const templates = [
    [53,41,'#aaa','#fff',[]],[53,35,'#444','#fff',quad],[51,33,'#fff','#c6dcf5',quad],[53,32,'#5cc39a','#fff',top5],
    [53,34,'#8fa8b0','#eaf5fb',bmc],[52,37,'#ccc','#f6f6f6',bmc],[53,29,'#e6b93a','#fff',[[.25,0,.25,.75],[.6,0,.6,.75],[0,.75,1,.75],[.5,.75,.5,1],[.6,.3,1,.3]],[[.6,0,.4,.75,'#1f8fc8'],[.63,.06,.34,.63,'#fff'],[0,.78,.47,.2,'#2f9a88'],[.03,.82,.41,.12,'#fff'],[.53,.78,.47,.2,'#e0405a'],[.56,.82,.41,.12,'#fff']]],[51,29,'#fff','#f4d6dc',bmc],
    [53,35,'#777','#fff',brick],[53,41,'#ef7f6a','#fff',brick],[53,46,'#aaa','#fff',big],[50,24,'#fff','#e4e4e4',grid(1,3),[[0,0,.33,1,'#c2f0cb'],[.67,0,.33,1,'#bcd9f7']]],
    [53,31,'#f0f0f0','#fff',grid(3,4),[[.3,.05,.1,.2,'#f5e28a'],[.7,.3,.1,.2,'#b8cce8'],[.45,.45,.1,.2,'#a8d8e8'],[.1,.7,.1,.2,'#c0dcc0']]],[51,38,'#fff','#fbb49c',big,[[.35,.35,.65,.27,'#f79a78']]],[53,46,'#3f7f7a','#fff',brick2],[45,53,'#4a6285','#fff',brick2],
    [42,47,'#d5dcf0','#d5dcf0',[[0,.3,1,.3],[.4,.3,.4,.9],[0,.9,1,.9],[.7,0,.7,.3]]],[53,47,'#222','#fff',side],[51,28,'#fff','#222',grid(2,4)],[53,38,'#8aa0a0','#fff',brick],
    [53,37,'#555','#fff',bmc],[53,34,'#ef9a4a','#fff',bmc,[[0,0,1,.08,'#ef9a4a'],[.05,.3,.1,.15,'#a8d4ec'],[.65,.3,.1,.15,'#a8d4ec'],[.25,.15,.1,.15,'#f0b080'],[.45,.5,.1,.15,'#a8d4ec']]],[51,39,'#fff','#e6e6e6',big],[53,35,'#d8607a','#fde8ee',bmc,[[0,.7,.5,.3,'#fff'],[.6,0,.2,.7,'#fff']]],
    [53,30,'#2fb5b5','#fff',bmc,[[0,.7,1,.12,'#2fb5b5'],[.2,.25,.2,.2,'#3a6ac0'],[.6,.25,.2,.2,'#3a6ac0']]],[53,33,'#f2f2e8','#fbf6ea',grid(1,5),[[.4,0,.2,1,'#e6f2fb'],[.6,0,.4,1,'#eef6e4']]],[53,32,'#222','#fff',bmc],[53,35,'#2b4d70','#a8ccee',bmc,[[.05,.2,.12,.25,'#7ab0de'],[.45,.2,.12,.25,'#7ab0de'],[.84,.2,.12,.4,'#9aa86a']]],
    [53,35,'#333','#fff',bmc,[[0,.05,.15,.2,'#f0a850'],[.25,.1,.12,.2,'#f08a50'],[.45,.1,.12,.2,'#5a9ad8'],[.65,.1,.12,.5,'#f0c050'],[.85,.1,.12,.2,'#5a9ad8'],[.1,.8,.3,.15,'#f0c878'],[.6,.8,.3,.15,'#7ab0de']]],[52,36,'#555','#fff',bmc,[[0,.7,1,.3,'#bde0f0'],[0,0,.2,.7,'#f8d0cc'],[.2,0,.2,.35,'#f8d0cc'],[.4,0,.2,.7,'#fbf0b8'],[.6,0,.2,.7,'#dff0c0'],[.8,0,.2,.7,'#dff0c0']]],[53,36,'#444','#fff',bmc],[52,35,'#e8dcd2','#f8f0ea',bmc,[[.05,.3,.1,.2,'#a8d4ec'],[.45,.1,.12,.2,'#a8d4ec'],[.85,.5,.1,.2,'#a8d4ec']]],
    [53,32,'#b5cf4a','#fff',bmc,[[.4,0,.3,.7,'#fff']]],[53,33,'#555','#fff',bmc],[53,37,'#f59a6a','#fff',big],[51,33,'#e0eee8','#e8f4ef',grid(3,3)],
    [53,41,'#666','#fff',grid(3,3)],[45,53,'#555','#fff',side],[44,53,'#4a6aa8','#e4ecf8',grid(8,4)],[53,43,'#666','#fff',grid(3,3),[[.7,.1,.2,.15,'#f0d070'],[.05,.4,.2,.15,'#f08a60'],[.7,.75,.2,.15,'#80c8a8']]],
    [52,39,'#555','#fff',grid(5,3)],[53,36,'#555','#fff',bmc],[53,35,'#555','#fff',grid(5,4),[[0,.4,1,.6,'#f8d8a8']]],[53,30,'#555','#fff',bmc],
    [53,36,'#999','#fff',bmc],[53,36,'#0a6cbc','#fff',bmc,[[0,0,1,.12,'#0a6cbc']]],[51,36,'#cfe6b8','#dcecc8',bmc],[53,36,'#8aa0b0','#fff',bmc]
];

const tplGrid = document.getElementById('tplGrid');
templates.forEach(([w, h, stroke, fill, lines, tints], i) => {
    const rects = (tints || []).map(([x, y, tw, th, c]) =>
        `<rect x="${x * w}" y="${y * h}" width="${tw * w}" height="${th * h}" fill="${c}" stroke="none"/>`).join('');
    const path = lines.map(([a, b, c, d]) => `M${a * w} ${b * h}L${c * w} ${d * h}`).join('');
    // selected template of the panel
    const on = i === 27 ? ' on' : '';
    tplGrid.insertAdjacentHTML('beforeend',
        `<div class="tpl${on}"><svg width="${w}" height="${h}" viewBox="-.5 -.5 ${w + 1} ${h + 1}" style="color:${stroke};stroke-width:1">
            <rect width="${w}" height="${h}" fill="${fill}" stroke="none"/>${rects}
            <path d="${path}"/><rect width="${w}" height="${h}"/></svg></div>`);
});

// theme cards: diamond, rectangle, parallelogram and two links
const themes = [
    { d: ['#fff','#2b4a5c',.8], r: ['#fff','#444',.8], p: ['#fff','#8a7650',.8], down: ['#2f6070',1], back: ['#666',1], h1: '#0d4a55', h2: '#333' },
    { d: ['#6a84a9','#6a84a9',1], r: ['#85abc3','#85abc3',1], p: ['#dbb57b','#dbb57b',1], down: ['#5a7a90',1], back: ['#8aa5b5',1], h1: '#4a5a70', h2: '#5a7a90', round: 1 },
    { d: ['#eeeafa','#8a80c4',1.4], r: ['#e8ebf7','#7f90c8',1.4], p: ['#edf1f9','#7f95c1',1.4], down: ['#6a5aa8',1.5], back: ['#4a5a98',1.5], h1: '#6a5aa8', h2: '#4a5a98', round: 1 },
    { d: ['#9ccbb5','#8ab8a2',.8], r: ['#93b795','#7a9a80',.8], p: ['#a5c9d6','#90b0c0',.8], down: ['#8a9a92',1], back: ['#8a9a92',1], h1: '#7a8a80', h2: '#6a7a72', round: 1 },
    { d: ['#fff','#5a70a8',1.4], r: ['#fff','#7e9ab0',1.4], p: ['#fff','#c0809a',1.4], down: ['#4a6488',1.6], back: ['#5e7085',1.6] },
    { d: ['#2495d1','#2495d1',1], r: ['#3a5a9c','#3a5a9c',1], p: ['#e8981c','#e8981c',1], down: ['#3a80b0',1], back: ['#5a7090',1], h1: '#2a70a0', h2: '#33508a', round: 1 },
    { d: ['#fdf0e8','#e8ad78',.8], r: ['#e2e6f2','#9aa5c8',1], p: ['#e6ebfa','#8fa3dc',.8], down: ['#b07030',1], back: ['#505a90',1], h1: '#a86020', h2: '#33447a', round: 1 },
    { d: ['#f7e4e6','#b53a4a',.8], r: ['#e0eff8','#5a9bb8',1], p: ['#fbe2dc','#c47f70',.8], down: ['#c03040',1], back: ['#3a8aa8',1], h1: '#8e1020', h2: '#1f7396', round: 1 }
];

const cards = document.getElementById('themeCards');
themes.forEach((t, i) => {
    const paint = ([fill, stroke, sw]) => `fill="${fill}" stroke="${stroke}" stroke-width="${sw}" stroke-linejoin="round"`;
    const head = (x, y, up, c) => c ? `<path d="M${x - 3.5} ${y}h7L${x} ${y + (up ? -6 : 6)}z" fill="${c}"/>` : '';
    const back = t.round ? 'M67 90H104q5 0 5-5V71' : 'M67 90H109V67';
    cards.insertAdjacentHTML('beforeend',
        `<div class="theme-card${i === 7 ? ' on' : ''}"><svg width="149" height="121" viewBox="0 0 149 121">
            <path d="M48 22l22 13.500-22 13.500-22-13.500z" ${paint(t.d)}/>
            <path d="M48 49V72" stroke="${t.down[0]}" stroke-width="${t.down[1]}"/>${head(48, 72, false, t.h1)}
            <rect x="29" y="78" width="38" height="24" rx="3" ${paint(t.r)}/>
            <path d="${back}" fill="none" stroke="${t.back[0]}" stroke-width="${t.back[1]}"/>${head(109, 73, true, t.h2)}
            <path d="M97 43H129q3 0 2 3l-6 18q-1 3-3 3H90q-3 0-2-3l6-18q1-3 3-3z" ${paint(t.p)}/>
        </svg></div>`);
});
```
